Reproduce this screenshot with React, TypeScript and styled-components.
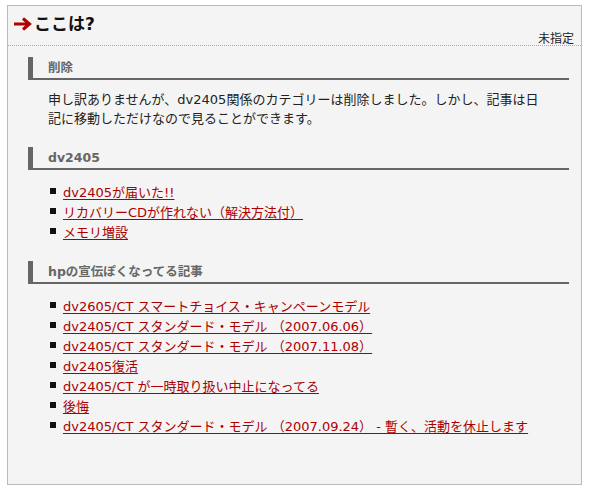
import React from "react";
import styled, { createGlobalStyle } from "styled-components";

const Global = createGlobalStyle`
  html, body { margin: 0; padding: 0; background: #ffffff; }
  body { font-family: "Noto Sans CJK JP", "DejaVu Sans", sans-serif; }
`;

const Page = styled.div`
  padding: 5px 0 0 7px;
`;

const Box = styled.div`
  width: 573px;
  height: 478px;
  border: 1px solid #bbbbbb;
  background: #f4f4f4;
  box-sizing: content-box;
`;

const Header = styled.div`
  display: flex;
  flex-direction: column;
  border-bottom: 1px dotted #aaaaaa;
  height: 39px;
  padding: 0 7px 0 5px;
`;

const Title = styled.h1`
  margin: 7px 0 0;
  display: flex;
  align-items: center;
  gap: 2px;
  font-family: "DejaVu Sans", "Noto Sans CJK JP", sans-serif;
  font-weight: bold;
  font-size: 17px;
  line-height: 22px;
  color: #111;
`;

const Meta = styled.div`
  margin-top: -5px;
  text-align: right;
  font-size: 12px;
  line-height: 16px;
  color: #222;
`;

const Section = styled.section<{ $gap?: number }>`
  margin: ${(p) => p.$gap ?? 11}px 12px 0 20px;
`;

const Heading = styled.h2`
  margin: 0;
  height: 21px;
  border-left: 5px solid #666666;
  border-bottom: 2px solid #666666;
  padding-left: 15px;
  font-family: "DejaVu Sans", "Noto Sans CJK JP", sans-serif;
  font-size: 12.5px;
  font-weight: bold;
  line-height: 21px;
  color: #666666;
`;

const Para = styled.p`
  margin: 10px 28px 0 20px;
  font-family: "DejaVu Sans", "Noto Sans CJK JP", sans-serif;
  font-size: 13px;
  line-height: 19px;
  color: #222;
`;

const List = styled.ul`
  margin: 11px 0 0 22px;
  padding: 0;
  list-style: none;
`;

const Item = styled.li`
  display: flex;
  align-items: center;
  height: 20px;
  font-family: "DejaVu Sans", "Noto Sans CJK JP", sans-serif;
  font-size: 13px;
  &::before {
    content: "";
    width: 6px;
    height: 6px;
    background: #111;
    margin-right: 7px;
    flex: none;
  }
`;

const Link = styled.a`
  color: #aa0000;
  text-decoration: underline;
  text-underline-offset: 2px;
`;

const Arrow = () => (
  <svg width="19" height="14" viewBox="0 0 19 14">
    <path d="M1 7 H16 M10 1.5 L16.5 7 L10 12.5" stroke="#b00000" strokeWidth="3" fill="none" strokeLinejoin="miter" />
  </svg>
);

const list1 = ["dv2405が届いた!!", "リカバリーCDが作れない（解決方法付）", "メモリ増設"];
const list2 = [
  "dv2605/CT スマートチョイス・キャンペーンモデル",
  "dv2405/CT スタンダード・モデル （2007.06.06）",
  "dv2405/CT スタンダード・モデル （2007.11.08）",
  "dv2405復活",
  "dv2405/CT が一時取り扱い中止になってる",
  "後悔",
  "dv2405/CT スタンダード・モデル （2007.09.24） - 暫く、活動を休止します",
];

export default function App() {
  return (
    <Page>
      <Global />
      <Box>
        <Header>
          <Title>
            <Arrow />
            ここは?
          </Title>
          <Meta>未指定</Meta>
        </Header>
        <Section>
          <Heading>削除</Heading>
          <Para>
            申し訳ありませんが、dv2405関係のカテゴリーは削除しました。しかし、記事は日記に移動しただけなので見ることができます。
          </Para>
        </Section>
        <Section $gap={19}>
          <Heading>dv2405</Heading>
          <List>
            {list1.map((t) => (
              <Item key={t}>
                <Link href="#">{t}</Link>
              </Item>
            ))}
          </List>
        </Section>
        <Section $gap={20}>
          <Heading>hpの宣伝ぽくなってる記事</Heading>
          <List>
            {list2.map((t) => (
              <Item key={t}>
                <Link href="#">{t}</Link>
              </Item>
            ))}
          </List>
        </Section>
      </Box>
    </Page>
  );
}
